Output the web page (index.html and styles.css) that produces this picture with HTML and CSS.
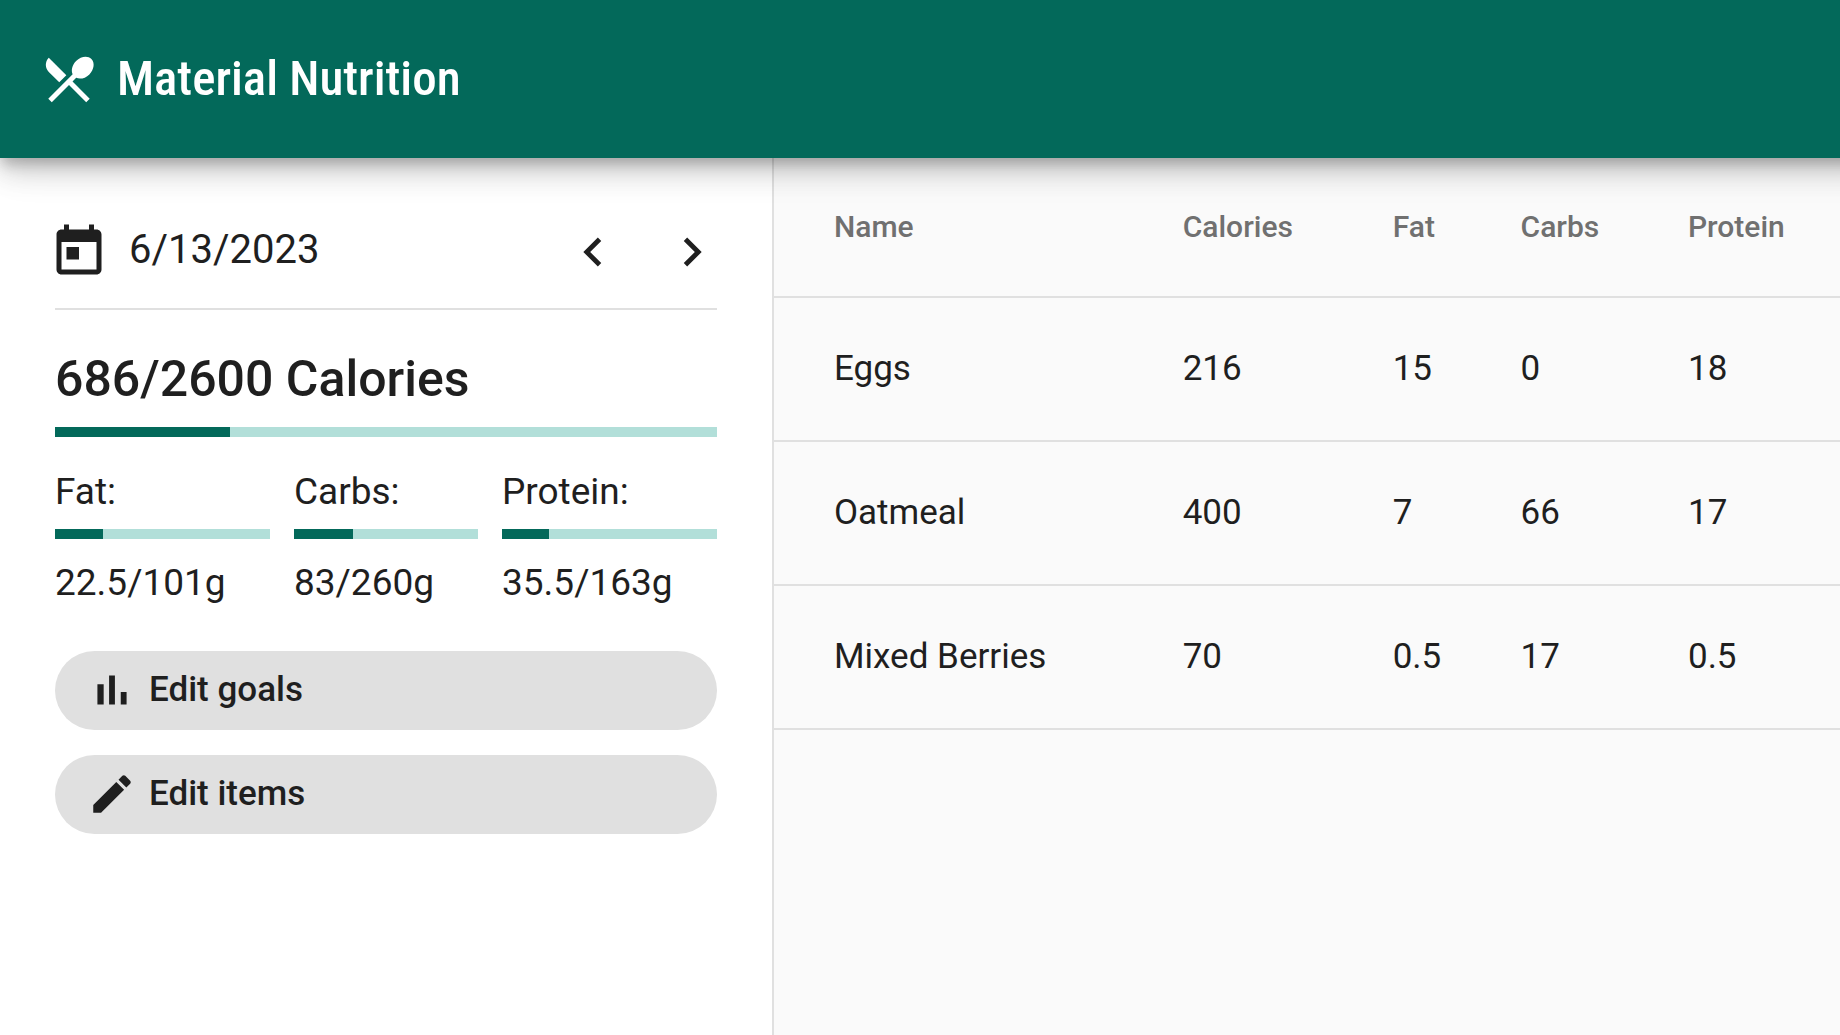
FILE: index.html
```html
<!DOCTYPE html>
<html lang="en">
<head>
<meta charset="utf-8">
<meta name="viewport" content="width=device-width, initial-scale=1">
<title>Material Nutrition</title>
<link rel="stylesheet" href="styles.css">
</head>
<body>
<header class="app-bar">
  <svg class="icon icon-large" viewBox="0 0 24 24" aria-hidden="true"><path d="M8.1 13.34l2.83-2.83L3.91 3.5c-1.56 1.56-1.56 4.09 0 5.66l4.19 4.18zm6.78-1.81c1.53.71 3.68.21 5.27-1.38 1.91-1.91 2.28-4.65.81-6.12-1.46-1.46-4.2-1.1-6.12.81-1.59 1.59-2.09 3.74-1.38 5.27L3.7 19.87l1.41 1.41L12 14.41l6.88 6.88 1.41-1.41L13.41 13l1.47-1.47z"/></svg>
  <h1 class="app-title">Material Nutrition</h1>
</header>
<div class="layout">
  <aside class="sidebar">
    <div class="date-bar">
      <svg class="icon icon-large" viewBox="0 0 24 24" aria-hidden="true"><path d="M19 3h-1V1h-2v2H8V1H6v2H5c-1.11 0-1.99.9-1.99 2L3 19c0 1.1.89 2 2 2h14c1.1 0 2-.9 2-2V5c0-1.1-.9-2-2-2zm0 16H5V8h14v11zM7 10h5v5H7z"/></svg>
      <span class="date">6/13/2023</span>
      <div class="date-nav">
        <button class="icon-button" type="button" aria-label="Previous day"><svg class="icon icon-medium" viewBox="0 0 24 24" aria-hidden="true"><path d="M15.41 7.41L14 6l-6 6 6 6 1.41-1.41L10.83 12z"/></svg></button>
        <button class="icon-button" type="button" aria-label="Next day"><svg class="icon icon-medium" viewBox="0 0 24 24" aria-hidden="true"><path d="M10 6L8.59 7.41 13.17 12l-4.58 4.59L10 18l6-6z"/></svg></button>
      </div>
    </div>
    <h2 class="calories">686/2600 Calories</h2>
    <div class="bar"><div class="bar-fill" style="width:26.4%"></div></div>
    <div class="macros">
      <div class="macro">
        <span>Fat:</span>
        <div class="bar"><div class="bar-fill" style="width:22.3%"></div></div>
        <span>22.5/101g</span>
      </div>
      <div class="macro">
        <span>Carbs:</span>
        <div class="bar"><div class="bar-fill" style="width:31.9%"></div></div>
        <span>83/260g</span>
      </div>
      <div class="macro">
        <span>Protein:</span>
        <div class="bar"><div class="bar-fill" style="width:21.8%"></div></div>
        <span>35.5/163g</span>
      </div>
    </div>
    <div class="actions">
      <button class="pill" type="button"><svg class="icon icon-small" viewBox="0 0 24 24" aria-hidden="true"><path d="M5 9.2h3V19H5zM10.6 5h2.8v14h-2.8zm5.6 8H19v6h-2.8z"/></svg>Edit goals</button>
      <button class="pill" type="button"><svg class="icon icon-small" viewBox="0 0 24 24" aria-hidden="true"><path d="M3 17.25V21h3.75L17.81 9.94l-3.75-3.75L3 17.25zM20.71 7.04c.39-.39.39-1.02 0-1.41l-2.34-2.34c-.39-.39-1.02-.39-1.41 0l-1.83 1.83 3.75 3.75 1.83-1.83z"/></svg>Edit items</button>
    </div>
  </aside>
  <main class="content">
    <table class="foods">
      <colgroup><col class="col-name"><col class="col-calories"><col class="col-fat"><col class="col-carbs"><col class="col-protein"></colgroup>
      <thead>
        <tr><th scope="col">Name</th><th scope="col">Calories</th><th scope="col">Fat</th><th scope="col">Carbs</th><th scope="col">Protein</th></tr>
      </thead>
      <tbody>
        <tr><td>Eggs</td><td>216</td><td>15</td><td>0</td><td>18</td></tr>
        <tr><td>Oatmeal</td><td>400</td><td>7</td><td>66</td><td>17</td></tr>
        <tr><td>Mixed Berries</td><td>70</td><td>0.5</td><td>17</td><td>0.5</td></tr>
      </tbody>
    </table>
  </main>
</div>
</body>
</html>
```
FILE: styles.css
```css
* { box-sizing: border-box; }

body {
  margin: 0;
  min-height: 100vh;
  display: flex;
  flex-direction: column;
  overflow-x: hidden;
  font-family: Roboto, sans-serif;
  color: #1f1f1f;
  background: #fafafa;
}

h1, h2 { margin: 0; font-weight: 500; }

button {
  border: 0;
  margin: 0;
  font: inherit;
  color: inherit;
  cursor: pointer;
}

.icon { display: block; flex: none; fill: currentColor; }
.icon-large { width: 60px; height: 60px; }
.icon-medium { width: 58px; height: 58px; }
.icon-small { width: 50px; height: 50px; }

/* The bar runs past the right edge so its shadow does not fade there. */
.app-bar {
  position: relative;
  z-index: 1;
  display: flex;
  align-items: center;
  gap: 18px;
  height: 158px;
  margin-right: -48px;
  padding: 0 39px;
  color: #fff;
  background: #03695a;
  box-shadow:
    0 8px 12px -2px rgba(0, 0, 0, .2),
    0 15px 25px 0 rgba(0, 0, 0, .14),
    0 2px 45px 0 rgba(0, 0, 0, .12);
}

.app-title {
  font-family: "Roboto Condensed", Roboto, sans-serif;
  font-size: 49px;
  line-height: 60px;
}

.layout {
  flex: 1;
  display: grid;
  grid-template-columns: 774fr 1066fr;
}

.sidebar {
  padding: 45px 55px;
  border-right: 2px solid #e0e0e0;
  background: #fff;
}

.date-bar {
  display: flex;
  align-items: center;
  height: 105px;
  padding-bottom: 8px;
  margin-left: -6px;
  margin-right: -4px;
}
.date {
  margin-left: 20px;
  padding-bottom: 4px;
  font-size: 40px;
  line-height: 48px;
}
.date-nav { display: flex; gap: 41px; margin-left: auto; }
.icon-button { padding: 0; background: none; }

.calories {
  padding: 39px 0 18px;
  border-top: 2px solid #e0e0e0;
  font-size: 50px;
  line-height: 60px;
}

.bar { height: 10px; background: #b2dfd9; }
.bar-fill { height: 100%; background: #03695a; }

.macros {
  display: grid;
  grid-template-columns: 215fr 184fr 215fr;
  gap: 24px;
  padding-top: 31px;
  font-size: 37px;
  line-height: 48px;
}
.macro { display: flex; flex-direction: column; }
.macro .bar { margin: 13px 0 20px; }

.actions { display: grid; gap: 25px; padding-top: 44px; }
.pill {
  display: flex;
  align-items: center;
  gap: 12px;
  height: 79px;
  padding: 0 32px 2px;
  border-radius: 40px;
  background: #e0e0e0;
  font-size: 35px;
  font-weight: 500;
}

.foods {
  width: 100%;
  table-layout: fixed;
  border-collapse: separate;
  border-spacing: 0;
}
.col-name { width: 34.4%; }
.col-calories { width: 19.7%; }
.col-fat { width: 12%; }
.col-carbs { width: 15.7%; }
.col-protein { width: 18.2%; }

.foods th, .foods td {
  height: 144px;
  padding: 0 0 2px 42px;
  border-bottom: 2px solid #e0e0e0;
  text-align: left;
  font-size: 35px;
  font-weight: 400;
}
.foods th {
  height: 140px;
  font-size: 30px;
  font-weight: 500;
  color: #707070;
}
.foods th:first-child, .foods td:first-child { padding-left: 60px; }
```
